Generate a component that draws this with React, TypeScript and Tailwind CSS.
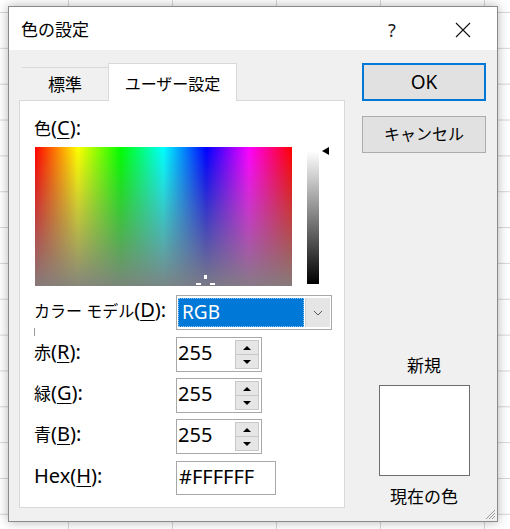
const font = { fontFamily: '"Noto Sans", "Noto Sans CJK JP", sans-serif' };

const U = ({ c }: { c: string }) => <span className="underline underline-offset-[3px] decoration-1">{c}</span>;

// CJK text renders wider than Yu Gothic UI, so it gets a smaller size than the Latin text
const J = ({ children, kana }: { children: React.ReactNode; kana?: boolean }) => (
  <span className={kana ? "text-[16px]" : "text-[17px]"}>{children}</span>
);

const Triangle = ({ down }: { down?: boolean }) => (
  <svg width="10" height="6" viewBox="0 0 10 6">
    <polygon points={down ? "1,1 9,1 5,5" : "1,5 9,5 5,1"} fill="#000" />
  </svg>
);

const Spin = ({ value }: { value: string }) => (
  <div className="flex h-[35px] w-[86px] items-center border border-[#a8a8a8] bg-white pl-[1px]">
    <span className="pb-[3px]">{value}</span>
    <div className="ml-auto mr-[2px] flex h-[29px] w-[24px] flex-col border border-[#c8c8c8]">
      <div className="flex flex-1 items-center justify-center border-b border-[#c8c8c8] bg-[#e6e6e6]">
        <Triangle />
      </div>
      <div className="flex flex-1 items-center justify-center bg-[#e6e6e6]">
        <Triangle down />
      </div>
    </div>
  </div>
);

const Row = ({ label, children, className }: { label: React.ReactNode; children: React.ReactNode; className: string }) => (
  <div className={`flex h-[35px] items-center ${className}`}>
    <div className="w-[142px] pb-[4px]">{label}</div>
    {children}
  </div>
);

export default function App() {
  return (
    <div
      className="h-[529px] w-[510px] overflow-hidden bg-white bg-[linear-gradient(to_right,#d6d6d6_1px,transparent_1px),linear-gradient(to_bottom,#d6d6d6_1px,transparent_1px)] bg-[size:104px_35.85px] bg-[position:68px_12px] pl-[8px] pt-[6px] text-[20px] leading-[24px] text-black"
      style={font}
    >
      <div className="relative flex h-[516px] w-[490px] flex-col border border-[#8a8a8a] bg-[#f0f0f0] shadow-[0_0_10px_rgba(0,0,0,0.3)]">
        {/* Title bar */}
        <div className="flex h-[43px] items-center bg-white pr-[11px] pl-[12px] pt-[2px]">
          <J>色の設定</J>
          <span className="ml-auto w-[30px] text-center text-[18px] text-[#222]">?</span>
          <div className="ml-[33px] flex w-[46px] justify-center">
            <svg width="16" height="16" viewBox="0 0 16 16">
              <path d="M1 1 L15 15 M15 1 L1 15" stroke="#111" strokeWidth="1.1" fill="none" />
            </svg>
          </div>
        </div>

        {/* Body */}
        <div className="flex flex-1 pl-[10px] pt-[13px]">
          <div className="w-[326px]">
            {/* Tabs */}
            <div className="flex h-[37px] items-end">
              <div className="ml-[3px] flex h-[33px] w-[86px] items-center justify-center border-t border-[#d9d9d9] pt-[1px]">
                <J>標準</J>
              </div>
              <div className="relative z-10 -mb-px flex h-[38px] w-[129px] items-center justify-center border border-b-0 border-[#d9d9d9] bg-white pt-[2px]">
                <J kana>ユーザー設定</J>
              </div>
            </div>

            {/* Panel */}
            <div className="h-[408px] border border-[#d9d9d9] bg-white pl-[14px] pt-[15px]">
              <div className="h-[25px]">
                <J>色</J>(<U c="C" />):
              </div>
              <div className="mt-[6px] flex items-start">
                <div className="relative ml-[1px] h-[139px] w-[257px] bg-[linear-gradient(to_bottom,rgba(128,128,128,0),rgba(128,128,128,0.95)),linear-gradient(to_right,#ff0000,#ffff00,#00ff00,#00ffff,#0000ff,#ff00ff,#ff0000)]">
                  <span className="absolute left-[169px] top-[128px] h-[4px] w-[3px] bg-white" />
                  <span className="absolute left-[161px] top-[136px] h-[2px] w-[5px] bg-white" />
                  <span className="absolute left-[175px] top-[136px] h-[2px] w-[5px] bg-white" />
                </div>
                <div className="ml-[15px] mt-[4px] h-[133px] w-[12px] bg-[linear-gradient(to_bottom,#ffffff,#808080,#000000)]" />
                <svg className="ml-[3px]" width="8" height="8" viewBox="0 0 8 8">
                  <polygon points="0,4 7,0 7,8" fill="#000" />
                </svg>
              </div>

              <Row
                className="relative mt-[9px]"
                label={
                  <span>
                    <J kana>カラー モデル</J>(<U c="D" />):
                  </span>
                }
              >
                <span className="absolute left-0 top-[33px] h-[8px] w-px bg-[#9a9a9a]" />
                <div className="flex h-[35px] w-[156px] border border-[#a8a8a8] bg-white px-[1px] py-[2px]">
                  <div className="flex flex-1 items-center border border-dotted border-[#8fc2ee] bg-[#0078d7] pb-[1px] pl-[3px] text-[19px] text-white">
                    RGB
                  </div>
                  <div className="ml-[1px] flex w-[25px] items-center justify-center border-l border-[#d0d0d0] bg-[#e5e5e5]">
                    <svg width="10" height="6" viewBox="0 0 10 6">
                      <polyline points="1,1 5,5 9,1" stroke="#555" strokeWidth="1" fill="none" />
                    </svg>
                  </div>
                </div>
              </Row>
              <Row className="mt-[7px]" label={<span><J>赤</J>(<U c="R" />):</span>}>
                <Spin value="255" />
              </Row>
              <Row className="mt-[6px]" label={<span><J>緑</J>(<U c="G" />):</span>}>
                <Spin value="255" />
              </Row>
              <Row className="mt-[6px]" label={<span><J>青</J>(<U c="B" />):</span>}>
                <Spin value="255" />
              </Row>
              <Row className="mt-[6px]" label={<span>Hex(<U c="H" />):</span>}>
                <div className="flex h-[34px] w-[100px] items-center border border-[#a8a8a8] bg-white pb-[2px] pl-[2px]">
                  #FFFFFF
                </div>
              </Row>
            </div>
          </div>

          {/* Right column */}
          <div className="ml-[17px] flex w-[124px] flex-col">
            <button className="flex h-[38px] items-center justify-center border-2 border-[#0078d7] bg-[#e1e1e1] pb-[1px] text-[19px]">
              OK
            </button>
            <button className="mt-[15px] flex h-[37px] items-center justify-center border border-[#adadad] bg-[#e1e1e1] pb-[2px]">
              <J kana>キャンセル</J>
            </button>
            <div className="mt-[200px] h-[24px] text-center">
              <J>新規</J>
            </div>
            <div className="mx-auto mt-[8px] h-[91px] w-[91px] border border-[#6d6d6d] bg-white" />
            <div className="mt-[8px] h-[24px] text-center">
              <J>現在の色</J>
            </div>
          </div>
        </div>

        <svg className="absolute bottom-[1px] right-[1px]" width="12" height="12" viewBox="0 0 12 12">
          <path d="M11 2 L2 11 M11 5 L5 11 M11 8 L8 11" stroke="#9a9a9a" strokeWidth="1" fill="none" />
        </svg>
      </div>
    </div>
  );
}
